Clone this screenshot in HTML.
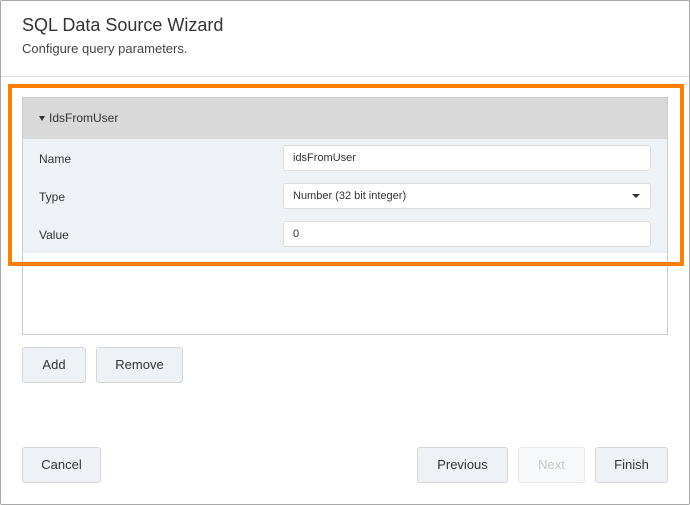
<!DOCTYPE html>
<html><head><style>
*{box-sizing:border-box;margin:0;padding:0}
body{width:690px;height:505px;background:#fff;font-family:"Liberation Sans",sans-serif;position:relative;overflow:hidden;color:#333}
.frame{position:absolute;left:0;top:0;width:690px;height:505px;border:1px solid #a8a8a8;border-radius:2px}
.t{position:absolute;left:22px;top:15px;font-size:18px;color:#333}
.s{position:absolute;left:22px;top:41px;font-size:13px;color:#444}
.div{position:absolute;left:1px;right:1px;top:76px;height:1px;background:#ddd}
.panel{position:absolute;left:22px;top:97px;width:646px;height:238px;border:1px solid #ccc;background:#fff}
.hdr{position:absolute;left:0;top:0;right:0;height:41px;background:#d9d9d9;font-size:12px;line-height:41px;padding-left:26px;color:#333}
.hdr:before{content:"";position:absolute;left:16px;top:18px;border-left:3px solid transparent;border-right:3px solid transparent;border-top:5px solid #333}
.rows{position:absolute;left:0;top:41px;right:0;height:114px;background:#eef1f6}
.lbl{position:absolute;left:16px;font-size:12px;color:#333}
.inp{position:absolute;left:260px;width:368px;height:26px;background:#fff;border:1px solid #dcdcdc;border-radius:3px;font-size:11px;line-height:24px;padding-left:9px;color:#333}
.arr{position:absolute;right:10px;top:10px;border-left:4px solid transparent;border-right:4px solid transparent;border-top:4px solid #333}
.orange{position:absolute;left:8px;top:84px;width:676px;height:182px;border:4px solid #ff8000}
.btn{position:absolute;height:36px;background:#eef1f6;border:1px solid #d6d6d6;border-radius:3px;font-size:13px;line-height:34px;text-align:center;color:#333}
</style></head><body>
<div class="frame"></div>
<div class="t">SQL Data Source Wizard</div>
<div class="s">Configure query parameters.</div>
<div class="div"></div>
<div class="panel">
<div class="hdr">IdsFromUser</div>
<div class="rows">
<div class="lbl" style="top:13px">Name</div>
<div class="lbl" style="top:51px">Type</div>
<div class="lbl" style="top:89px">Value</div>
<div class="inp" style="top:6px">idsFromUser</div>
<div class="inp" style="top:44px">Number (32 bit integer)<span class="arr"></span></div>
<div class="inp" style="top:82px">0</div>
</div>
</div>
<div class="orange"></div>
<div class="btn" style="left:22px;top:347px;width:64px">Add</div>
<div class="btn" style="left:96px;top:347px;width:87px">Remove</div>
<div class="btn" style="left:22px;top:447px;width:79px">Cancel</div>
<div class="btn" style="left:417px;top:447px;width:91px">Previous</div>
<div class="btn" style="left:518px;top:447px;width:67px;background:#f7f8fa;border-color:#e8e8e8;color:#c8c8c8">Next</div>
<div class="btn" style="left:595px;top:447px;width:73px">Finish</div>
</body></html>
